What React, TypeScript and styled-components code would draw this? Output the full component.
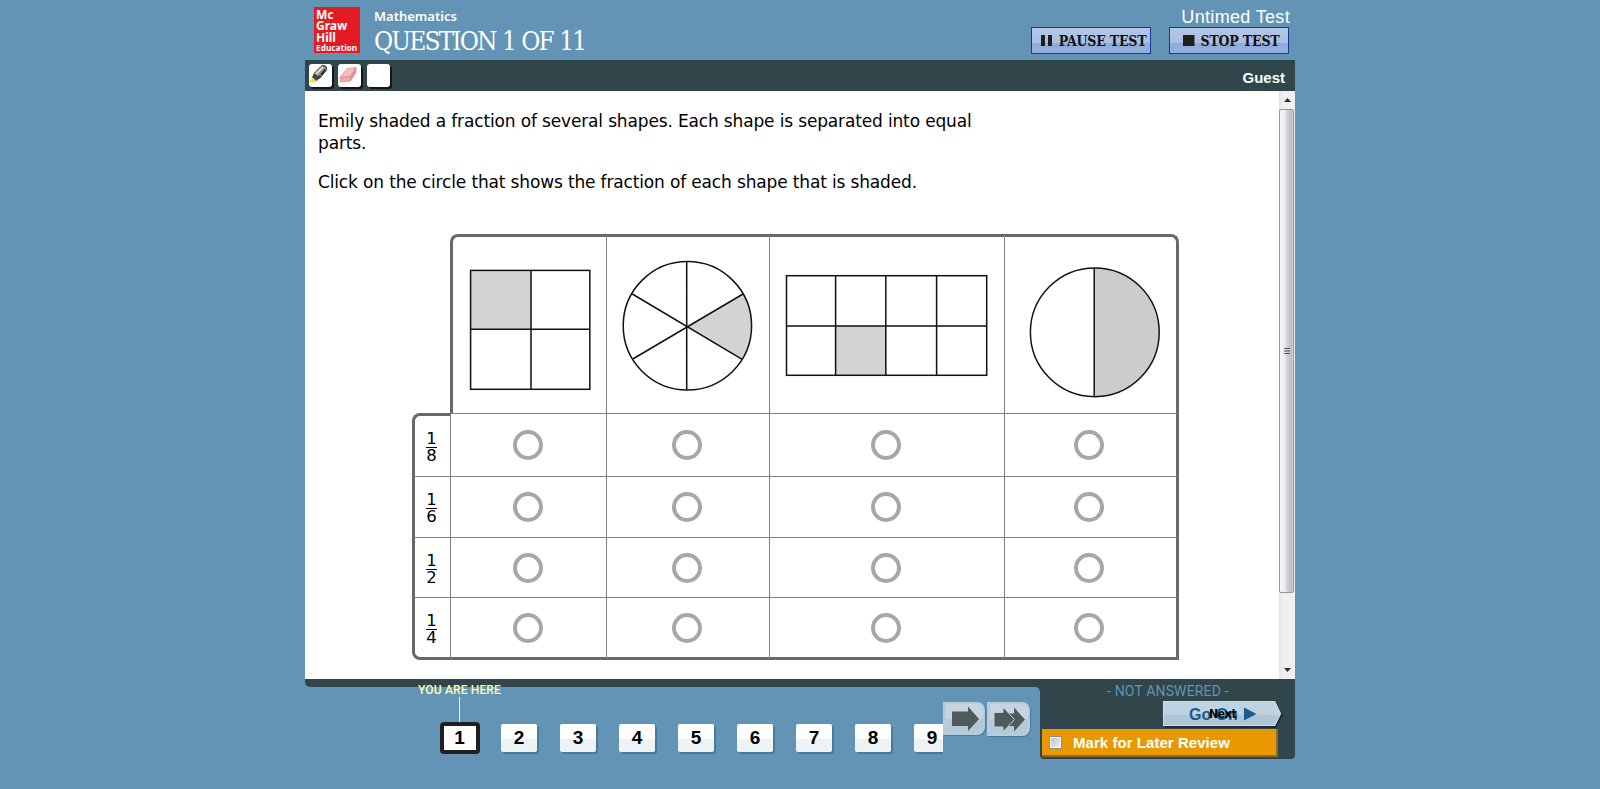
import React from "react";
import styled, { createGlobalStyle } from "styled-components";

const sans = `"Liberation Sans", Arial, sans-serif`;
const verdana = `"DejaVu Sans", Verdana, sans-serif`;
const slab = `"DejaVu Serif Condensed", "DejaVu Serif", serif`;
const blue = "#6394b5";
const dark = "#30464b";
const frame = "#686868";
const rule = "#808080";

const GlobalStyle = createGlobalStyle`
  * { box-sizing: border-box; }
  body { margin: 0; background: ${blue}; overflow: hidden; }
`;

const Page = styled.div`
  width: 990px;
  height: 789px;
  margin: 0 auto;
  display: flex;
  flex-direction: column;
  font-family: ${sans};
`;

const Header = styled.header`
  height: 60px;
  flex: none;
  display: flex;
  color: #fff;
`;

const Logo = styled.div`
  width: 46px;
  height: 46px;
  margin: 7px 0 0 9px;
  padding: 2px 0 0 2px;
  background: #e31b23;
  font: 700 12px/11.4px "Noto Sans", sans-serif;
  white-space: nowrap;
`;

const LogoLine = styled.div<{ $small?: boolean }>`
  font-size: ${(p) => (p.$small ? "8.3px" : "12px")};
  line-height: ${(p) => (p.$small ? "9px" : "11.4px")};
`;

const Titles = styled.div`
  margin: 6px 0 0 14px;
  flex: 1;
  white-space: nowrap;
`;

const Subject = styled.div`
  font: 600 13px/20px "Noto Sans", sans-serif;
`;

const QuestionTitle = styled.div`
  font: 400 26px/30px ${slab};
  letter-spacing: -1.85px;
  word-spacing: 0.7px;
`;

const Session = styled.div`
  display: flex;
  flex-direction: column;
  align-items: flex-end;
  padding-right: 5px;
`;

const Timer = styled.div`
  font-size: 18px;
  line-height: 20px;
  margin-top: 7px;
  letter-spacing: 0.33px;
`;

const Controls = styled.div`
  display: flex;
  gap: 18px;
  margin-right: 1px;
`;

const ControlButton = styled.button`
  width: 120px;
  height: 27px;
  padding: 0 0 0 4px;
  display: flex;
  align-items: center;
  justify-content: center;
  gap: 6px;
  border: 1px solid #103a9a;
  background: linear-gradient(#b4c6e6 0%, #a9bfe4 60%, #8eabda 62%, #94b0dd 100%);
  color: #111;
  font: 700 14px/20px ${slab};
  letter-spacing: -0.2px;
  white-space: nowrap;
`;

const Toolbar = styled.div`
  height: 31px;
  flex: none;
  display: flex;
  padding: 4px 10px 0 4px;
  gap: 6px;
  background: ${dark};
`;

const Tool = styled.div`
  width: 23px;
  height: 23px;
  border-radius: 3px;
  background: #fff;
  box-shadow: 2px 2px 0 #10181a;
  svg { display: block; }
`;

const User = styled.div`
  margin-left: auto;
  color: #fff;
  font: 700 15px/18px ${sans};
  padding-top: 5px;
`;

const Body = styled.main`
  height: 588px;
  flex: none;
  display: flex;
  background: #fff;
`;

const Content = styled.div`
  flex: 1;
  padding: 19px 0 0 13px;
`;

const Prompt = styled.p`
  margin: 0 0 17px;
  width: 670px;
  color: #000;
  font: 400 17px/22px ${verdana};
  letter-spacing: -0.15px;
`;

const Answers = styled.div`
  margin: 41px 0 0 94px;
  width: 767px;
  display: grid;
  grid-template-columns: 38px 156px 163px 235px 175px;
  grid-template-rows: 179px 63px 61px 60px 63px;
`;

const ShapeCell = styled.div<{ $first?: boolean; $last?: boolean }>`
  border-top: 3px solid ${frame};
  border-left: ${(p) => (p.$first ? `3px solid ${frame}` : `1px solid ${rule}`)};
  border-right: ${(p) => (p.$last ? `3px solid ${frame}` : "0")};
  border-top-left-radius: ${(p) => (p.$first ? "8px" : "0")};
  border-top-right-radius: ${(p) => (p.$last ? "8px" : "0")};
  svg { display: block; }
`;

const LabelCell = styled.div<{ $first?: boolean; $last?: boolean }>`
  border-left: 3px solid ${frame};
  border-top: ${(p) => (p.$first ? `3px solid ${frame}` : `1px solid ${rule}`)};
  border-bottom: ${(p) => (p.$last ? `3px solid ${frame}` : "0")};
  border-top-left-radius: ${(p) => (p.$first ? "8px" : "0")};
  border-bottom-left-radius: ${(p) => (p.$last ? "8px" : "0")};
  display: flex;
  justify-content: center;
  padding: 16px 2px 0 0;
`;

const ChoiceCell = styled.div<{ $pad: number; $lastRow?: boolean; $lastCol?: boolean; $firstRow?: boolean }>`
  border-left: 1px solid ${rule};
  border-top: 1px solid ${rule};
  border-right: ${(p) => (p.$lastCol ? `3px solid ${frame}` : "0")};
  border-bottom: ${(p) => (p.$lastRow ? `3px solid ${frame}` : "0")};
  display: flex;
  justify-content: center;
  padding-right: ${(p) => p.$pad}px;
  padding-top: ${(p) => (p.$firstRow ? "16px" : "15px")};
`;

const Radio = styled.div`
  width: 30px;
  height: 30px;
  border: 4px solid #a7a7a7;
  border-radius: 50%;
`;

const Fraction = styled.div`
  width: 11px;
  height: 32px;
  display: flex;
  flex-direction: column;
  align-items: center;
  font: 400 16.5px/16px ${verdana};
  color: #000;
`;

const Numerator = styled.span`
  width: 11px;
  height: 16px;
  line-height: 14px;
  display: flex;
  justify-content: center;
  border-bottom: 1px solid #000;
`;

const ScrollTrack = styled.div`
  width: 16px;
  display: flex;
  flex-direction: column;
  justify-content: space-between;
  background: linear-gradient(90deg, #e3e3e3, #f0f0f0 25%, #f0f0f0);
`;

const ScrollTop = styled.div`
  display: flex;
  flex-direction: column;
`;

const ScrollArrow = styled.div`
  height: 18px;
  display: flex;
  align-items: center;
  justify-content: center;
`;

const ScrollThumb = styled.div`
  width: 15px;
  height: 484px;
  border: 1px solid #979797;
  border-radius: 2px;
  background: linear-gradient(90deg, #f6f6f6, #e9e9eb 42%, #d4d4d8 50%, #bcbcc2 90%, #dedee0);
  display: flex;
  align-items: center;
  justify-content: center;
`;

const Footer = styled.footer`
  height: 80px;
  flex: none;
  display: flex;
  background: linear-gradient(${dark}, ${dark}) 0 0 / 100% 20px no-repeat;
  border-bottom-left-radius: 5px;
`;

const NavColumn = styled.div`
  width: 735px;
  display: flex;
  flex-direction: column;
`;

const Strip = styled.div`
  height: 8px;
  background: ${dark};
  border-bottom-left-radius: 5px;
`;

const StripBase = styled.div`
  background: ${blue};
  height: 8px;
  flex: none;
`;

const Nav = styled.nav`
  flex: 1;
  display: flex;
  background: ${blue};
  border-top-right-radius: 5px;
`;

const Questions = styled.div`
  width: 442px;
  height: 72px;
  display: flex;
  align-items: flex-start;
  overflow: hidden;
`;

const Here = styled.div`
  width: 83px;
  display: flex;
  flex-direction: column;
  align-items: center;
  margin: -4px 0 0 113px;
  flex: none;
`;

const HereLabel = styled.div`
  color: #fbfbb4;
  font: 500 12px/14px Roboto, ${sans};
  letter-spacing: 0.15px;
  white-space: nowrap;
`;

const HereLine = styled.div`
  width: 1px;
  height: 25px;
  background: #fbfbb4;
`;

const Current = styled.div`
  width: 40px;
  height: 32px;
  border: 4px solid #231f20;
  border-radius: 4px;
  background: #fff;
  font: 700 19px/24px ${sans};
  text-align: center;
`;

const QuestionBox = styled.div`
  width: 36px;
  height: 28px;
  margin: 37px 23px 0 0;
  flex: none;
  border-radius: 2px;
  background: linear-gradient(#fff 52%, #edf2f5 55%, #edf2f5);
  box-shadow: 2px 2px 0 #4d7896;
  font: 700 19px/28px ${sans};
  text-align: center;
`;

const PageArrow = styled.div<{ $w: number; $h: number }>`
  width: ${(p) => p.$w}px;
  height: ${(p) => p.$h}px;
  margin: 15px 2px 0 0;
  flex: none;
  border-radius: 0 8px 8px 0;
  border: 2px solid #b8ccdc;
  border-left-width: 3px;
  background: linear-gradient(#c6d5e1 50%, #b5c9db 52%);
  box-shadow: 1px 1px 0 #4d7896;
  svg { display: block; margin: -2px 0 0 -3px; }
`;

const Status = styled.aside`
  width: 255px;
  height: 80px;
  background: ${dark};
  border-radius: 0 0 4px 4px;
  padding-left: 2px;
`;

const StatusText = styled.div`
  color: #6394b5;
  font: 400 14px/16px Roboto, ${sans};
  padding: 4px 0 0 65px;
  height: 22px;
  letter-spacing: 0.15px;
`;

const GoOn = styled.div`
  width: 121px;
  height: 28px;
  margin-left: 121px;
  display: grid;
  > * { grid-area: 1 / 1; }
  svg { display: block; }
`;

const GoOnText = styled.span`
  color: #1a5a8c;
  font: 700 16px/27px ${sans};
  padding-left: 26px;
  z-index: 1;
`;

const NextText = styled.span`
  color: #000;
  font: 700 12px/26px "DejaVu Sans Condensed", ${sans};
  letter-spacing: -0.3px;
  padding-left: 46px;
  z-index: 2;
`;

const Review = styled.label`
  width: 236px;
  height: 28px;
  display: flex;
  align-items: center;
  padding-left: 7px;
  background: #e89800;
  border-right: 2px solid #93662c;
  border-bottom: 2px solid #93662c;
  color: #fff;
  font: 700 15px/26px ${sans};
  white-space: nowrap;
`;

const ReviewText = styled.span`
  padding-top: 2px;
  letter-spacing: 0.05px;
`;

const CheckBox = styled.span`
  width: 13px;
  height: 13px;
  margin-right: 11px;
  border: 1px solid #8e8f8f;
  outline: 1px solid #f4f4f4;
  outline-offset: -2px;
  background: linear-gradient(135deg, #b8bcc2, #f4f4f4);
`;

const stroke = { stroke: "#111", strokeWidth: 1.5, fill: "none" };

const SquareShape = () => (
  <svg width="152" height="175">
    <rect x="18" y="34" width="60" height="58" fill="#d2d3d5" />
    <g {...stroke}>
      <rect x="17.6" y="33.4" width="119.2" height="118.9" />
      <path d="M78 33V152M17.6 92.2H137" />
    </g>
  </svg>
);

const SixthsShape = () => (
  <svg width="160" height="175">
    <path d="M80 90L136 57A64 64 0 0 1 135.5 122.5Z" fill="#d2d3d5" />
    <g {...stroke}>
      <circle cx="80.4" cy="88.8" r="64.2" />
      <path d="M79.7 24.6V153M25.3 57L135.2 122.4M136 57L25.8 122" />
    </g>
  </svg>
);

const EighthsShape = () => (
  <svg width="232" height="175">
    <rect x="66" y="89" width="50" height="49" fill="#d2d3d5" />
    <g {...stroke}>
      <rect x="16.5" y="38.7" width="200.2" height="99.6" />
      <path d="M65.6 38V138M115.8 38V138M166.6 38V138M16 89H216.5" />
    </g>
  </svg>
);

const HalvesShape = () => (
  <svg width="170" height="175">
    <path d="M89.2 30.8A64.5 64.5 0 0 1 89.2 159.8Z" fill="#ccc" />
    <g {...stroke}>
      <circle cx="89.8" cy="95.3" r="64.4" />
      <path d="M89.2 31V159.5" />
    </g>
  </svg>
);

const PenIcon = () => (
  <svg width="23" height="23" viewBox="0 0 23 23">
    <path d="M1 18L3 13L7.5 17L5 18.5Z" fill="#f5e11c" />
    <path d="M3 13L5 9.5L10.5 14.5L7.5 17Z" fill="#444" />
    <path d="M5 9.5L12 2.5Q14 .5 16.5 2Q18.500 4 17 6.500L10.500 14.500Z" fill="#8b8b8b" stroke="#333" />
    <path d="M7 10L14 3" stroke="#ddd" strokeWidth="2" />
    <path d="M10 13L16.5 5.5" stroke="#222" strokeWidth="1.5" />
    <path d="M8 7.5L12.5 12" stroke="#d8b820" />
  </svg>
);

const EraserIcon = () => (
  <svg width="23" height="23" viewBox="0 0 23 23" strokeLinejoin="round" stroke="#cf8484" strokeWidth=".6">
    <path d="M2 13.5L9 4.5L18 3.5L12.5 12.5Z" fill="#f5bcbc" />
    <path d="M2 13.5L12.5 12.5V17L2.5 18Z" fill="#f1a9a9" />
    <path d="M12.5 12.5L18 3.5V8.5L12.5 17Z" fill="#e59898" />
  </svg>
);

const shapes = [SquareShape, SixthsShape, EighthsShape, HalvesShape];
const radioOffsets = [1, 2, 2, 3];
const denominators = [8, 6, 2, 4];
const questions = [2, 3, 4, 5, 6, 7, 8, 9];

export default function App() {
  return (
    <>
      <GlobalStyle />
      <Page>
        <Header>
          <Logo>
            <LogoLine>Mc</LogoLine>
            <LogoLine>Graw</LogoLine>
            <LogoLine>Hill</LogoLine>
            <LogoLine $small>Education</LogoLine>
          </Logo>
          <Titles>
            <Subject>Mathematics</Subject>
            <QuestionTitle>QUESTION 1 OF 11</QuestionTitle>
          </Titles>
          <Session>
            <Timer>Untimed Test</Timer>
            <Controls>
              <ControlButton>
                <svg width="13" height="11"><path d="M1 0h4v11H1zM8 0h4v11H8z" fill="#231f20" /></svg>
                PAUSE TEST
              </ControlButton>
              <ControlButton>
                <svg width="12" height="11"><path d="M0 0h11.5v11H0z" fill="#231f20" /></svg>
                STOP TEST
              </ControlButton>
            </Controls>
          </Session>
        </Header>
        <Toolbar>
          <Tool><PenIcon /></Tool>
          <Tool><EraserIcon /></Tool>
          <Tool />
          <User>Guest</User>
        </Toolbar>
        <Body>
          <Content>
            <Prompt>
              Emily shaded a fraction of several shapes. Each shape is separated into equal parts.
            </Prompt>
            <Prompt>Click on the circle that shows the fraction of each shape that is shaded.</Prompt>
            <Answers>
              <div />
              {shapes.map((Shape, i) => (
                <ShapeCell key={i} $first={i === 0} $last={i === 3}>
                  <Shape />
                </ShapeCell>
              ))}
              {denominators.map((d, r) => (
                <React.Fragment key={d}>
                  <LabelCell $first={r === 0} $last={r === 3}>
                    <Fraction>
                      <Numerator>1</Numerator>
                      <span>{d}</span>
                    </Fraction>
                  </LabelCell>
                  {radioOffsets.map((pad, c) => (
                    <ChoiceCell key={c} $pad={pad} $firstRow={r === 0} $lastRow={r === 3} $lastCol={c === 3}>
                      <Radio />
                    </ChoiceCell>
                  ))}
                </React.Fragment>
              ))}
            </Answers>
          </Content>
          <ScrollTrack>
            <ScrollTop>
              <ScrollArrow>
                <svg width="7" height="4"><path d="M3.5 0L7 4H0Z" fill="#333" /></svg>
              </ScrollArrow>
              <ScrollThumb>
                <svg width="6" height="8"><path d="M0 1.5h6M0 4h6M0 6.500h6" stroke="#555" /></svg>
              </ScrollThumb>
            </ScrollTop>
            <ScrollArrow>
              <svg width="7" height="4"><path d="M0 0H7L3.5 4Z" fill="#333" /></svg>
            </ScrollArrow>
          </ScrollTrack>
        </Body>
        <Footer>
          <NavColumn>
            <StripBase><Strip /></StripBase>
            <Nav>
              <Here>
                <HereLabel>YOU ARE HERE</HereLabel>
                <HereLine />
                <Current>1</Current>
              </Here>
              <Questions>
                {questions.map((q) => <QuestionBox key={q}>{q}</QuestionBox>)}
              </Questions>
              <PageArrow $w={42} $h={33}>
                <svg width="42" height="33"><path d="M9 9.5H25V4.500L36 17L25 29V24H9Z" fill="#50595c" /></svg>
              </PageArrow>
              <PageArrow $w={43} $h={34}>
                <svg width="43" height="34">
                  <path d="M20 11.500H27V5.500L38 17.500L27 29.500V24H20Z" fill="#50595c" />
                  <path d="M7 10.500H16V5L27.500 17.500L16 30V25H7Z" fill="#50595c" stroke="#c0d0dd" />
                </svg>
              </PageArrow>
            </Nav>
          </NavColumn>
          <Status>
            <StatusText>- NOT ANSWERED -</StatusText>
            <GoOn>
              <svg width="121" height="28">
                <path d="M2 2H113L120 14L113 27H2Z" fill="#1d2d31" />
                <path d="M0 0H112L118 12.5L112 25H0Z" fill="#bfd2e0" />
                <path d="M0 14H117.500L112 25H0Z" fill="#adc5d8" />
                <path d="M.5 .5H111.500L117.500 12.500L111.500 24.500H.5Z" fill="none" stroke="#d0dfe9" />
                <path d="M81 6.500L93.500 13L81 19.500Z" fill="#1a5a8c" />
              </svg>
              <GoOnText>Go On</GoOnText>
              <NextText>Next</NextText>
            </GoOn>
            <Review>
              <CheckBox />
              <ReviewText>Mark for Later Review</ReviewText>
            </Review>
          </Status>
        </Footer>
      </Page>
    </>
  );
}
